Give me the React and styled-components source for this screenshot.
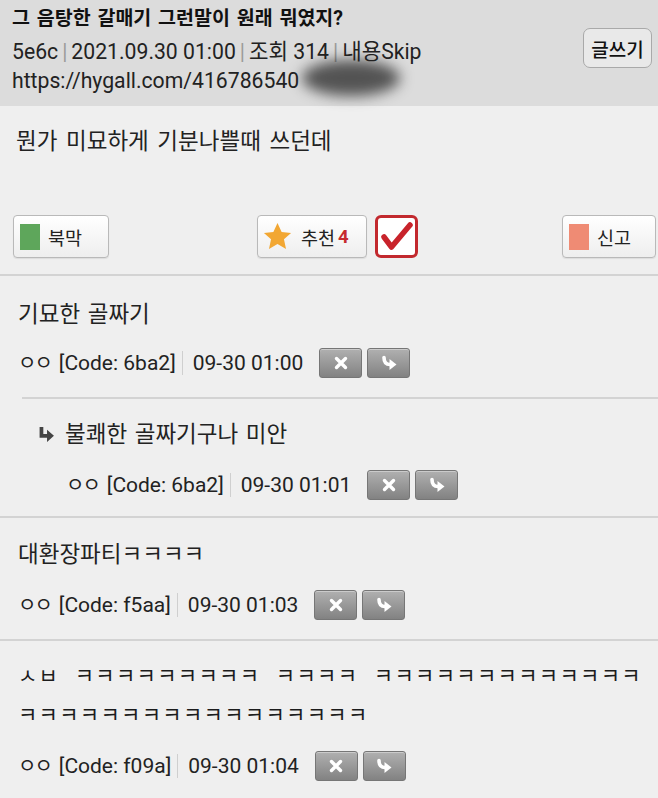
import React from "react";
import styled, { createGlobalStyle } from "styled-components";

const Global = createGlobalStyle`
  html, body {
    margin: 0;
    padding: 0;
    background: #efefef;
  }
  body {
    font-family: "Roboto", "Noto Sans CJK KR", sans-serif;
    color: #222;
  }
`;

const Page = styled.div`
  width: 658px;
  min-height: 798px;
  background: #efefef;
  overflow: hidden;
`;

const Header = styled.header`
  position: relative;
  display: flex;
  justify-content: space-between;
  align-items: flex-start;
  background: #dcdcdc;
  padding: 4px 6px 11px 12px;
`;

const HeadInfo = styled.div`
  display: flex;
  flex-direction: column;
`;

const Title = styled.h1`
  margin: 0;
  font-size: 19.5px;
  font-weight: 700;
  line-height: 30px;
  color: #111;
  word-spacing: 2px;
`;

const Meta = styled.div`
  margin-top: 3px;
  font-size: 21.2px;
  line-height: 30px;
  color: #222;
`;

const Url = styled.div`
  font-size: 21.2px;
  line-height: 28px;
  color: #222;
`;

const Sep = styled.span`
  color: #9a9a9a;
  margin: 0 4px;
`;

const Smudge = styled.div`
  position: absolute;
  left: 302px;
  top: 60px;
  width: 98px;
  height: 36px;
  border-radius: 50%;
  background: rgba(30, 30, 30, 0.72);
  filter: blur(7px);
`;

const WriteButton = styled.button`
  margin-top: 24px;
  width: 69px;
  height: 40px;
  border: 1px solid #a9a9a9;
  border-radius: 7px;
  background: #e9e9e9;
  font-family: inherit;
  font-size: 19px;
  font-weight: 500;
  color: #111;
  padding: 0;
`;

const Post = styled.section`
  padding: 20px 2px 16px 16px;
  border-bottom: 2px solid #d3d3d3;
`;

const PostText = styled.p`
  margin: 0;
  font-size: 22.5px;
  line-height: 30px;
  word-spacing: 3px;
  color: #222;
`;

const ButtonRow = styled.div`
  margin: 59px 0 0 -3px;
  display: flex;
  align-items: center;
`;

const Middle = styled.div`
  display: flex;
  align-items: center;
  gap: 8px;
  margin-left: 148px;
  margin-right: auto;
`;

const VoteButton = styled.button`
  display: flex;
  align-items: center;
  gap: 8px;
  height: 43px;
  width: ${(p) => p.$w}px;
  padding: 0 0 0 ${(p) => p.$pl || 6}px;
  border: 1px solid #b9b9b9;
  border-radius: 4px;
  background: linear-gradient(#ffffff, #eeeeee);
  font-family: inherit;
  font-size: 18.5px;
  color: #222;
  box-shadow: 0 1px 1px rgba(0, 0, 0, 0.08);
`;

const Swatch = styled.span`
  width: 20px;
  height: 26px;
  background: ${(p) => p.$color};
`;

const Count = styled.b`
  color: #c62a2f;
  margin-left: -5px;
`;

const CheckBox = styled.div`
  width: 43px;
  height: 43px;
  box-sizing: border-box;
  border: 3px solid #c2292e;
  border-radius: 6px;
  background: #fff;
  display: flex;
  align-items: center;
  justify-content: center;
`;

const Thread = styled.section`
  border-bottom: 2px solid #d3d3d3;
`;

const Comment = styled.div`
  padding: ${(p) => p.$pt || 20}px 0 ${(p) => p.$pb || 17}px
    ${(p) => (p.$reply ? 16 : 18)}px;
`;

const ReplyBox = styled.div`
  margin-left: 22px;
  border-top: 2px solid #d3d3d3;
`;

const CommentText = styled.div`
  display: flex;
  align-items: center;
  gap: 10px;
  font-size: 22.5px;
  line-height: 30px;
  word-spacing: 2px;
  color: #222;
`;

const JamoText = styled.div`
  font-size: 21px;
  line-height: 39px;
  white-space: pre;
  letter-spacing: 1.3px;
  word-spacing: 9px;
  color: #1c1c1c;
`;

const CommentMeta = styled.div`
  margin-top: ${(p) => p.$mt || 20}px;
  display: flex;
  align-items: center;
  font-size: 21px;
  line-height: 32px;
  color: #222;
  padding-left: ${(p) => (p.$reply ? 28 : 0)}px;
`;

const Nick = styled.span`
  font-size: 20px;
  letter-spacing: -2px;
  margin-right: 8px;
`;

const Bar = styled.span`
  width: 1px;
  height: 24px;
  background: #cfcfcf;
  margin: 0 10px 0 6px;
`;

const Actions = styled.span`
  display: flex;
  gap: 5px;
  margin-left: 16px;
`;

const ActionButton = styled.span`
  width: 43px;
  height: 30px;
  box-sizing: border-box;
  border: 1px solid #767676;
  border-radius: 3px;
  background: linear-gradient(#b0b0b0, #828282);
  display: flex;
  align-items: center;
  justify-content: center;
  box-shadow: inset 0 1px 0 rgba(255, 255, 255, 0.35);
`;

const Star = () => (
  <svg width="31" height="31" viewBox="0 0 24 24">
    <path
      d="M12 1.5l3.2 7 7.3.7-5.5 5 1.6 7.4L12 17.9l-6.6 3.7L7 14.2 1.5 9.2l7.3-.7z"
      fill="#f2a733"
    />
  </svg>
);

const Check = () => (
  <svg width="32" height="30" viewBox="0 0 32 30">
    <path
      d="M3 15l7.5 10L29 3"
      fill="none"
      stroke="#c8232b"
      strokeWidth="5.5"
      strokeLinecap="round"
      strokeLinejoin="round"
    />
  </svg>
);

const XIcon = () => (
  <svg width="16" height="16" viewBox="0 0 16 16">
    <path
      d="M3.5 3.5l9 9M12.5 3.5l-9 9"
      stroke="#fff"
      strokeWidth="3.4"
      strokeLinecap="round"
    />
  </svg>
);

const ArrowIcon = () => (
  <svg width="18" height="16" viewBox="0 0 18 16">
    <path
      d="M4 2.5C4 7 6 9.5 10 9.5"
      fill="none"
      stroke="#fff"
      strokeWidth="3.6"
      strokeLinecap="round"
    />
    <path d="M9.5 4L16.5 9.5 9.5 15z" fill="#fff" />
  </svg>
);

const ReplyArrow = () => (
  <svg width="17" height="17" viewBox="0 0 16 16">
    <path d="M1.5 1h3.5v6.5h3.5V3.5L15 9.2 8.5 15v-4H1.5z" fill="#444" />
  </svg>
);

const CommentFooter = ({ code, time, reply, mt }) => (
  <CommentMeta $reply={reply} $mt={mt}>
    <Nick>ㅇㅇ</Nick>[Code: {code}]<Bar />
    {time}
    <Actions>
      <ActionButton>
        <XIcon />
      </ActionButton>
      <ActionButton>
        <ArrowIcon />
      </ActionButton>
    </Actions>
  </CommentMeta>
);

export default function App() {
  return (
    <Page>
      <Global />
      <Header>
        <HeadInfo>
          <Title>그 음탕한 갈매기 그런말이 원래 뭐였지?</Title>
          <Meta>
            5e6c<Sep>|</Sep>2021.09.30 01:00<Sep>|</Sep>조회 314<Sep>|</Sep>내용Skip
          </Meta>
          <Url>https://hygall.com/416786540</Url>
        </HeadInfo>
        <WriteButton>글쓰기</WriteButton>
        <Smudge />
      </Header>

      <Post>
        <PostText>뭔가 미묘하게 기분나쁠때 쓰던데</PostText>
        <ButtonRow>
          <VoteButton $w={96}>
            <Swatch $color="#5ea65b" />
            북막
          </VoteButton>
          <Middle>
            <VoteButton $w={110} $pl={4}>
              <Star />
              추천 <Count>4</Count>
            </VoteButton>
            <CheckBox>
              <Check />
            </CheckBox>
          </Middle>
          <VoteButton $w={94}>
            <Swatch $color="#ef8b74" />
            신고
          </VoteButton>
        </ButtonRow>
      </Post>

      <Thread>
        <Comment $pt={23} $pb={18}>
          <CommentText>기묘한 골짜기</CommentText>
          <CommentFooter code="6ba2" time="09-30 01:00" mt={18} />
        </Comment>
        <ReplyBox>
          <Comment $reply $pb={15}>
            <CommentText>
              <ReplyArrow />
              불쾌한 골짜기구나 미안
            </CommentText>
            <CommentFooter code="6ba2" time="09-30 01:01" reply />
          </Comment>
        </ReplyBox>
      </Thread>

      <Thread>
        <Comment $pt={21} $pb={18}>
          <CommentText>대환장파티ㅋㅋㅋㅋ</CommentText>
          <CommentFooter code="f5aa" time="09-30 01:03" />
        </Comment>
      </Thread>

      <Thread>
        <Comment $pt={16}>
          <JamoText>
            {"ㅅㅂ ㅋㅋㅋㅋㅋㅋㅋㅋㅋ ㅋㅋㅋㅋ ㅋㅋㅋㅋㅋㅋㅋㅋㅋㅋㅋㅋㅋ\nㅋㅋㅋㅋㅋㅋㅋㅋㅋㅋㅋㅋㅋㅋㅋㅋㅋ"}
          </JamoText>
          <CommentFooter code="f09a" time="09-30 01:04" mt={15} />
        </Comment>
      </Thread>
    </Page>
  );
}
